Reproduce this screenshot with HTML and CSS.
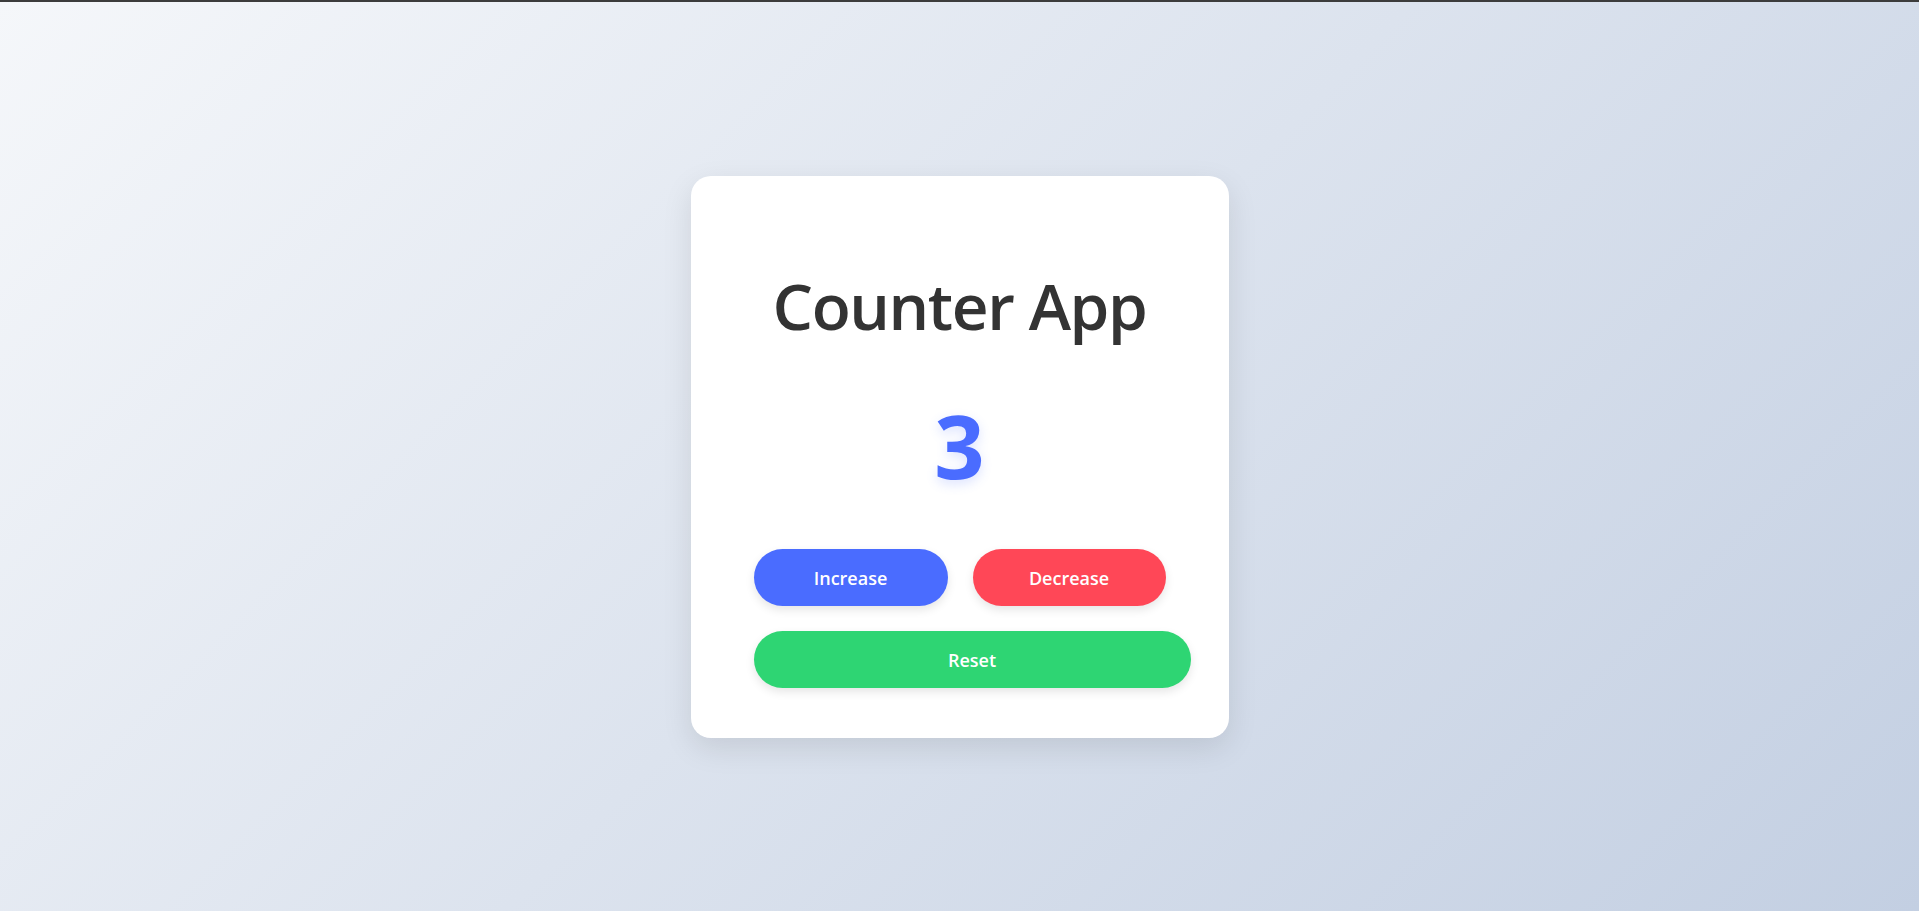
FILE: index.html
```html
<!DOCTYPE html>
<html lang="en">
<head>
    <meta charset="UTF-8">
    <meta name="viewport" content="width=device-width, initial-scale=1.0">
    <title>Counter App</title>
    <link rel="stylesheet" href="styles.css">
</head>
<body>
    <div class="counter-card">
        <h1>Counter App</h1>
        <div id="count" class="count">3</div>

        <div class="controls">
            <div class="btn-row">
                <button id="increase" class="btn btn-increase">Increase</button>
                <button id="decrease" class="btn btn-decrease">Decrease</button>
            </div>
            <button id="reset" class="btn btn-reset">Reset</button>
        </div>
    </div>

    <script>
        let count = 3;
        const countEl = document.getElementById('count');

        document.getElementById('increase').addEventListener('click', function() {
            count++;
            countEl.textContent = count;
        });
        document.getElementById('decrease').addEventListener('click', function() {
            count--;
            countEl.textContent = count;
        });
        document.getElementById('reset').addEventListener('click', function() {
            count = 0;
            countEl.textContent = count;
        });
    </script>
</body>
</html>
```

FILE: styles.css
```css
* {
    box-sizing: border-box;
}

body {
    font-family: "Open Sans", "Noto Sans", Arial, sans-serif;
    margin: 0;
    min-height: 100vh;
    border-top: 2px solid #3c3c3c;
    background: linear-gradient(135deg, #f5f7fa 0%, #c3cfe2 100%);
    display: flex;
    align-items: center;
    justify-content: center;
}

.counter-card {
    width: 538px;
    height: 562px;
    background-color: white;
    border-radius: 20px;
    box-shadow: 0 10px 30px rgba(0, 0, 0, 0.1);
    padding: 86px 48px 48px 48px;
    text-align: center;
}

.counter-card h1 {
    font-size: 64px;
    font-weight: 600;
    letter-spacing: -1.4px;
    color: #333;
    margin: 0 0 36px 0;
}

.count {
    font-size: 88px;
    font-weight: 700;
    color: #4a6cff;
    line-height: 120px;
    text-shadow: 0 4px 12px rgba(74, 108, 255, 0.2);
    margin-bottom: 44px;
}

.controls {
    margin-left: 15px;
    display: flex;
    flex-direction: column;
    gap: 25px;
}

.btn-row {
    display: flex;
    gap: 25px;
}

.btn {
    font-family: inherit;
    font-size: 18px;
    font-weight: 600;
    line-height: 25px;
    color: white;
    border: none;
    padding: 17px 0 15px 0;
    border-radius: 50px;
    cursor: pointer;
    box-shadow: 0 4px 10px rgba(0, 0, 0, 0.1);
}

.btn-increase {
    width: 194px;
    background-color: #4a6cff;
}

.btn-decrease {
    width: 193px;
    background-color: #ff4757;
}

.btn-reset {
    width: 437px;
    background-color: #2ed573;
}
```
